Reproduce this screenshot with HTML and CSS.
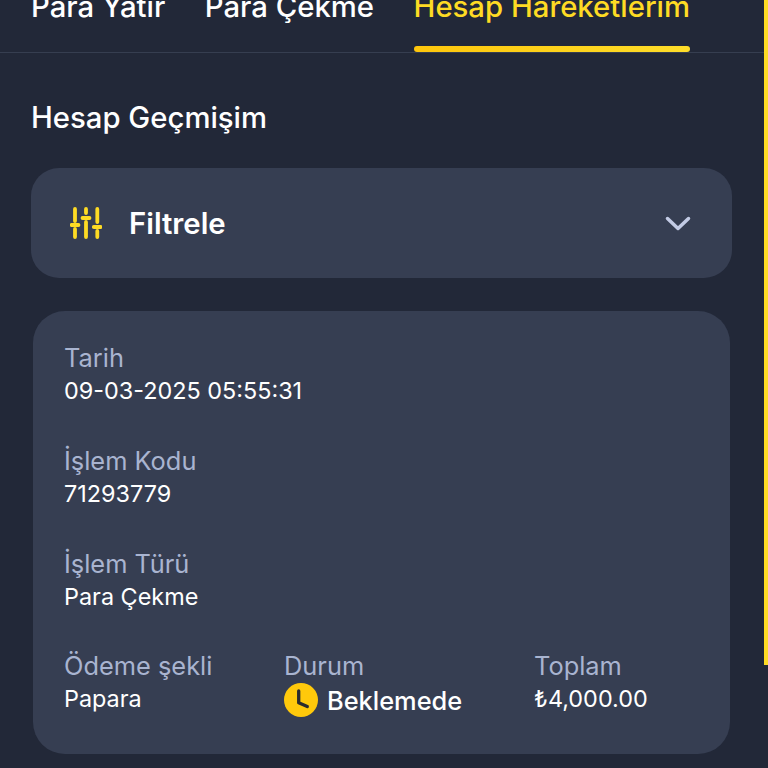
FILE: index.html
```html
<!DOCTYPE html>
<html lang="tr">
<head>
<meta charset="utf-8">
<title>Hesap Geçmişim</title>
<link rel="stylesheet" href="styles.css">
</head>
<body>
<div class="page">
  <nav class="tabs">
    <a class="tab">Para Yatır</a>
    <a class="tab">Para Çekme</a>
    <a class="tab active">Hesap Hareketlerim</a>
  </nav>
  <h1 class="title">Hesap Geçmişim</h1>
  <section class="filter">
    <svg class="filter-icon" viewBox="0 0 32 32" width="32" height="32" fill="none" stroke="#fedb24" stroke-width="3.800" stroke-linecap="round">
      <path d="M5 2V14M5 22V30M16 2V6M16 15V30M27.300 2V15M27.300 24V30"/>
      <path d="M1.500 18H8.500M12.500 11H19.500M23.800 20H30.800"/>
    </svg>
    <span class="filter-label">Filtrele</span>
    <svg class="chevron" viewBox="0 0 26 16" width="26" height="16" fill="none" stroke="#c3cbe5" stroke-width="3.500" stroke-linecap="round" stroke-linejoin="round">
      <path d="M2.500 3.500L13 13.500L23.500 3.500"/>
    </svg>
  </section>
  <section class="record">
    <div class="field"><div class="label">Tarih</div><div class="value">09-03-2025 05:55:31</div></div>
    <div class="field"><div class="label">İşlem Kodu</div><div class="value">71293779</div></div>
    <div class="field"><div class="label">İşlem Türü</div><div class="value">Para Çekme</div></div>
    <div class="row">
      <div class="col-pay"><div class="label">Ödeme şekli</div><div class="value">Papara</div></div>
      <div class="col-status">
        <div class="label">Durum</div>
        <div class="status">
          <svg class="clock" viewBox="0 0 34 34" width="34" height="34">
            <circle cx="17" cy="17" r="17" fill="#ffc90b"/>
            <path d="M14.700 8V19.800L23.300 23.500" fill="none" stroke="#2a2b2e" stroke-width="3.300" stroke-linecap="round" stroke-linejoin="round"/>
          </svg>
          <span class="status-text">Beklemede</span>
        </div>
      </div>
      <div class="col-total"><div class="label">Toplam</div><div class="value">₺4,000.00</div></div>
    </div>
  </section>
  <div class="scrollbar"></div>
</div>
</body>
</html>
```
FILE: styles.css
```css
* { box-sizing: border-box; }
html, body { margin: 0; padding: 0; height: 768px; overflow: hidden; }
body { background: #222838; font-family: Inter, "Noto Sans", sans-serif; color: #fff; }
.page { position: relative; height: 768px; overflow: hidden; }
.tabs {
  display: flex;
  gap: 39.5px;
  height: 53px;
  padding: 0 31px;
  border-bottom: 1px solid #363e50;
  margin-bottom: 47px;
}
.tab {
  position: relative;
  height: 63px;
  margin-top: -11px;
  font-size: 29.3px;
  line-height: 36px;
  font-weight: 500;
  color: #fff;
  white-space: nowrap;
}
.tab.active { color: #fedb24; }
.tab.active::after {
  content: "";
  position: absolute;
  left: 0; right: 0; bottom: 0;
  height: 6px;
  border-radius: 3px;
  background: linear-gradient(90deg, #fec60c, #fedd2a);
}
.title {
  margin: 0 31px 33px;
  font-size: 29.3px;
  line-height: 35px;
  font-weight: 500;
}
.filter {
  display: flex;
  align-items: center;
  height: 110px;
  margin: 0 36px 33px 31px;
  padding: 0 41px 0 39px;
  border-radius: 28px;
  background: #363e52;
}
.filter-icon { flex: none; margin-right: 27px; }
.filter-label { flex: 1; font-size: 29.3px; font-weight: 600; }
.record {
  height: 443px;
  margin: 0 38px 0 33px;
  padding: 30px 31px;
  border-radius: 32px;
  background: #363e52;
}
.field { margin-bottom: 36.800px; }
.label { font-size: 25.4px; line-height: 34px; color: #a9b4d0; }
.value { font-size: 23.4px; line-height: 32px; color: #fff; }
.row { display: flex; }
.col-pay { width: 220px; }
.col-status { width: 250px; }
.status { display: flex; align-items: center; gap: 9px; height: 34px; }
.status-text { font-size: 25.4px; font-weight: 500; }
.clock { flex: none; }
.scrollbar {
  position: absolute;
  top: 0; right: 0;
  width: 4px;
  height: 665px;
  background: #fedb24;
}
```
